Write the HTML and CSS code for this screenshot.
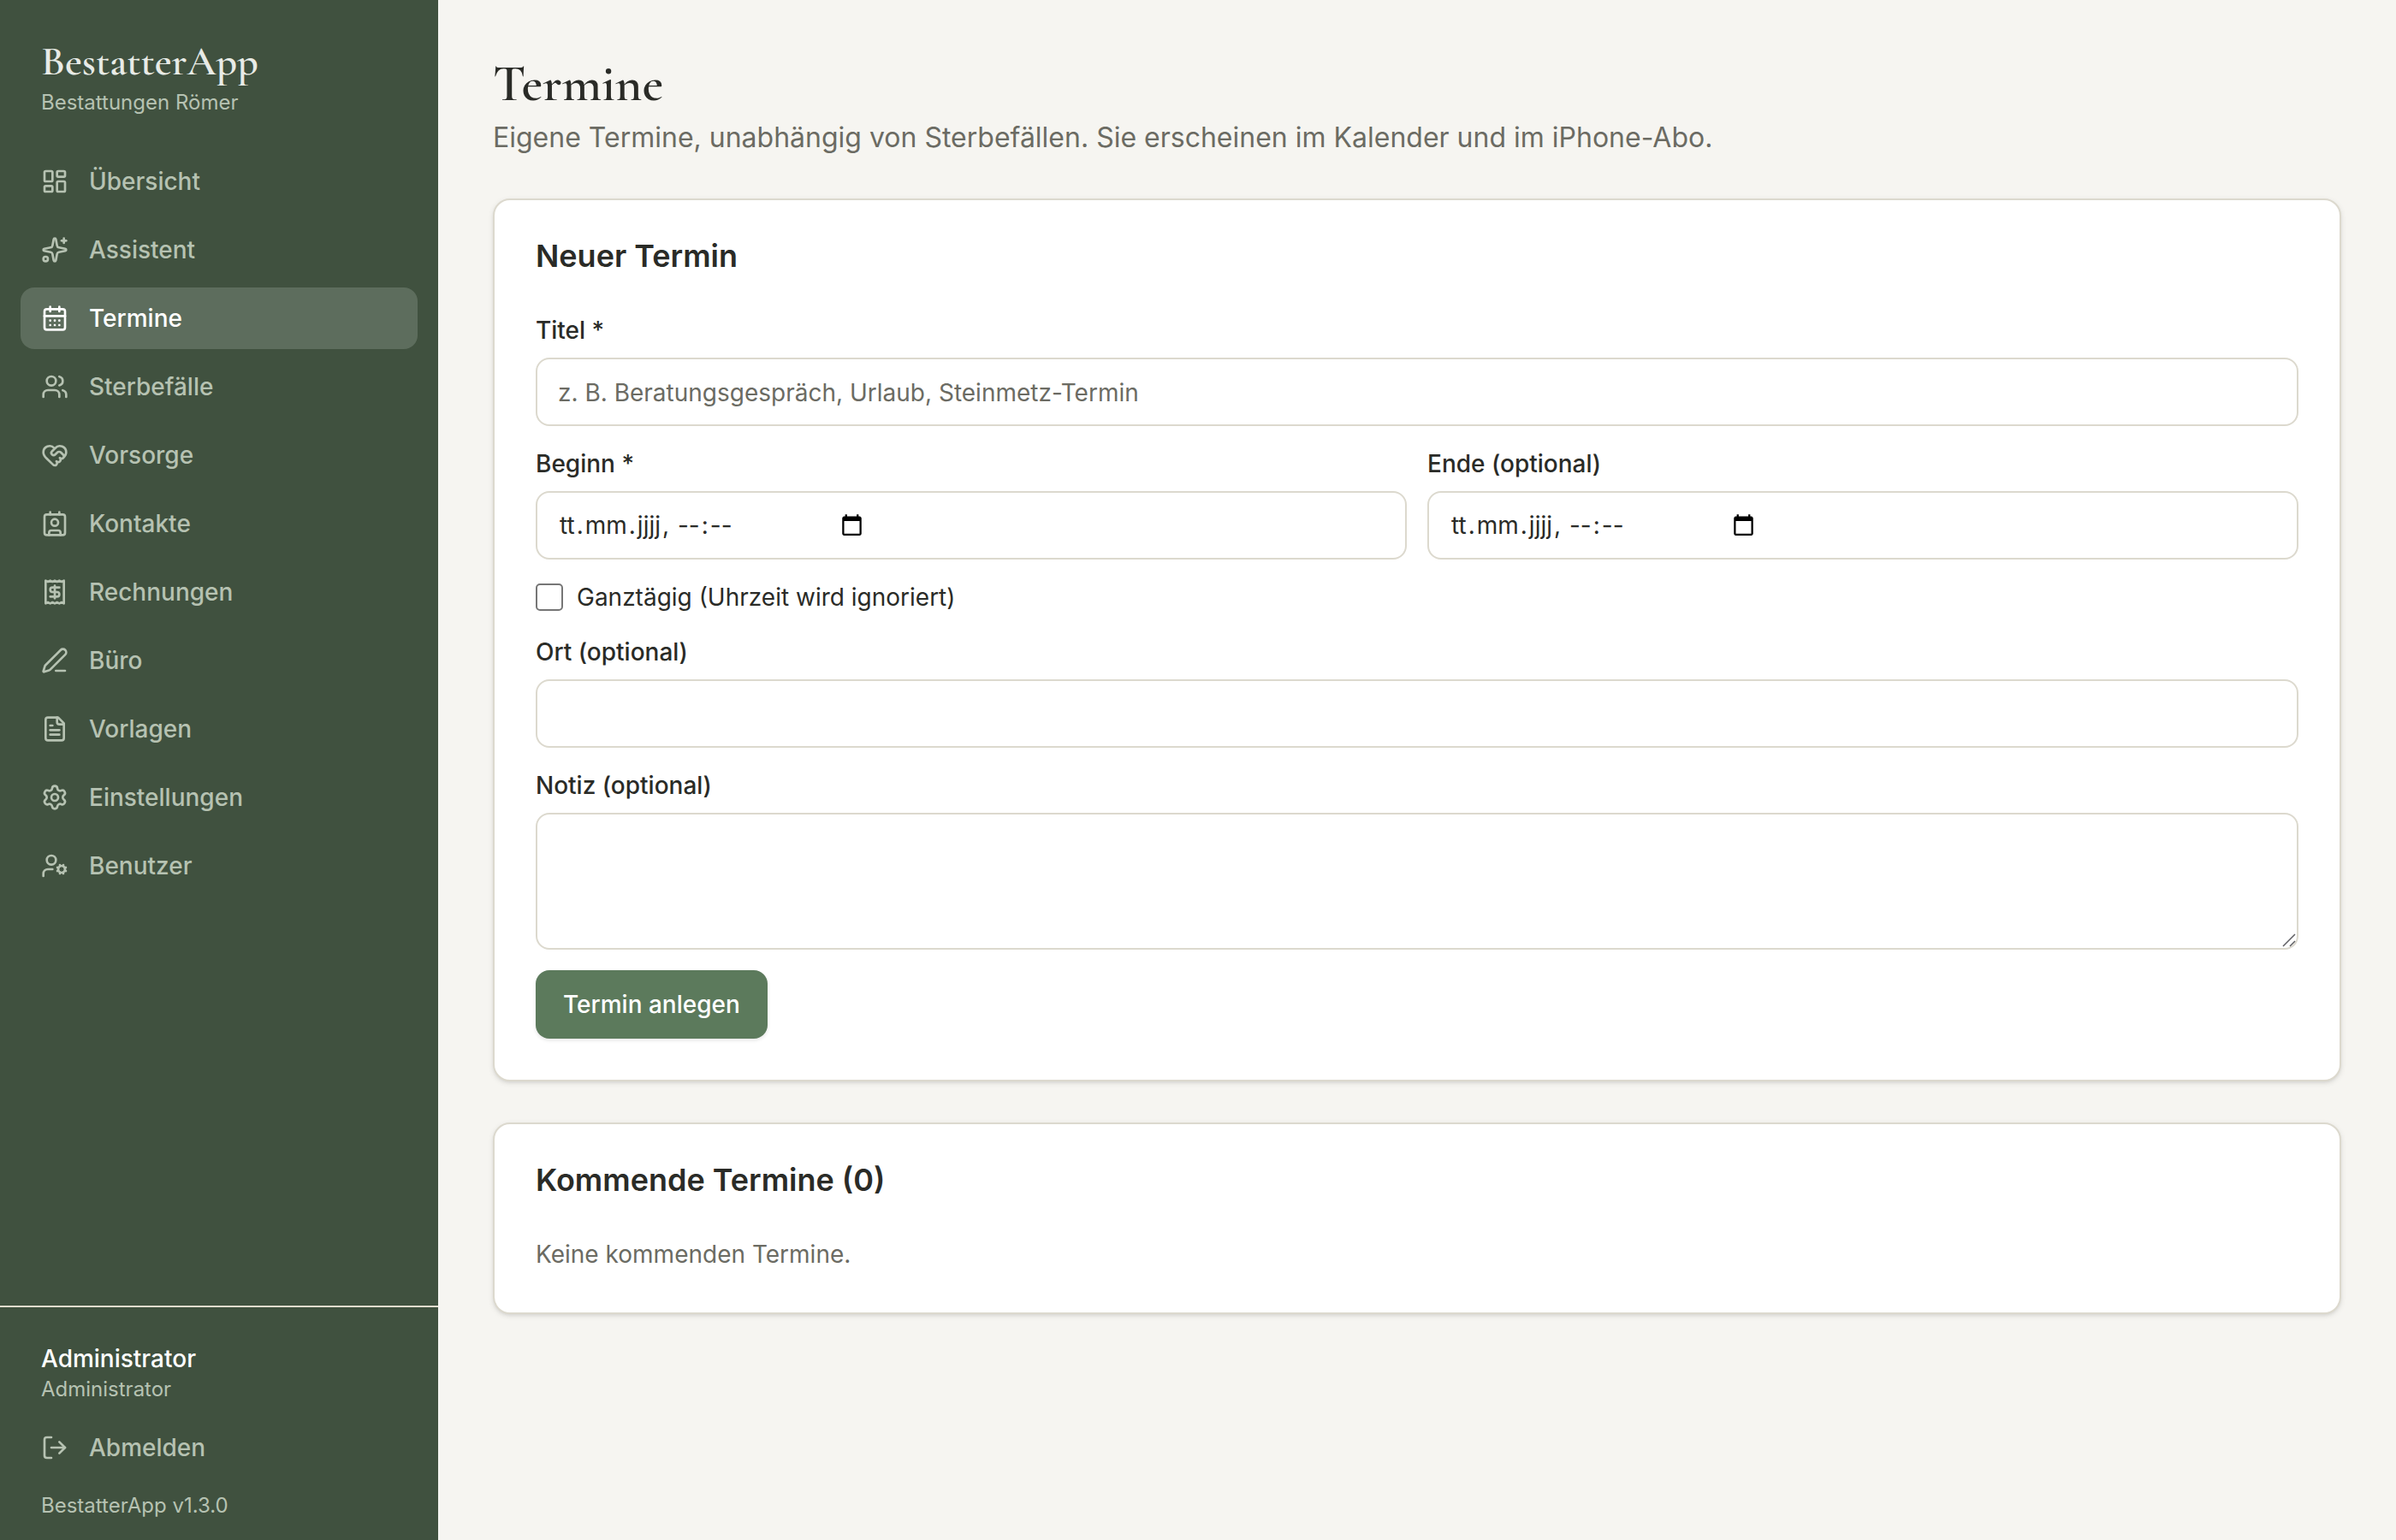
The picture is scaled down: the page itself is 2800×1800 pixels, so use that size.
FILE: index.html
```html
<!DOCTYPE html>
<html lang="de">
<head>
    <meta charset="UTF-8">
    <meta name="viewport" content="width=device-width, initial-scale=1.0">
    <title>Termine – BestatterApp</title>
    <link rel="stylesheet" href="styles.css">
</head>
<body>
    <aside class="sidebar">
        <div class="brand">
            <div class="brand-name">BestatterApp</div>
            <div class="brand-sub">Bestattungen Römer</div>
        </div>
        <nav class="nav">
            <a class="nav-item">
                <svg class="icon" viewBox="0 0 24 24"><rect width="7" height="9" x="3" y="3" rx="1"/><rect width="7" height="5" x="14" y="3" rx="1"/><rect width="7" height="9" x="14" y="12" rx="1"/><rect width="7" height="5" x="3" y="16" rx="1"/></svg>
                <span>Übersicht</span>
            </a>
            <a class="nav-item">
                <svg class="icon" viewBox="0 0 24 24"><path d="M11.017 2.814a1 1 0 0 1 1.966 0l1.051 5.558a2 2 0 0 0 1.594 1.594l5.558 1.051a1 1 0 0 1 0 1.966l-5.558 1.051a2 2 0 0 0-1.594 1.594l-1.051 5.558a1 1 0 0 1-1.966 0l-1.051-5.558a2 2 0 0 0-1.594-1.594l-5.558-1.051a1 1 0 0 1 0-1.966l5.558-1.051a2 2 0 0 0 1.594-1.594z"/><path d="M20 2v4"/><path d="M22 4h-4"/><circle cx="4" cy="20" r="2"/></svg>
                <span>Assistent</span>
            </a>
            <a class="nav-item active">
                <svg class="icon" viewBox="0 0 24 24"><path d="M8 2v4"/><path d="M16 2v4"/><rect width="18" height="18" x="3" y="4" rx="2"/><path d="M3 10h18"/><path d="M8 14h.01"/><path d="M12 14h.01"/><path d="M16 14h.01"/><path d="M8 18h.01"/><path d="M12 18h.01"/><path d="M16 18h.01"/></svg>
                <span>Termine</span>
            </a>
            <a class="nav-item">
                <svg class="icon" viewBox="0 0 24 24"><path d="M16 21v-2a4 4 0 0 0-4-4H6a4 4 0 0 0-4 4v2"/><path d="M16 3.128a4 4 0 0 1 0 7.744"/><path d="M22 21v-2a4 4 0 0 0-3-3.87"/><circle cx="9" cy="7" r="4"/></svg>
                <span>Sterbefälle</span>
            </a>
            <a class="nav-item">
                <svg class="icon" viewBox="0 0 24 24"><path d="M19.414 14.414C21 12.828 22 11.5 22 9.5a5.5 5.5 0 0 0-9.591-3.676.6.6 0 0 1-.818.001A5.5 5.5 0 0 0 2 9.5c0 2.3 1.5 4 3 5.5l5.535 5.362a2 2 0 0 0 2.879.052 2.12 2.12 0 0 0-.004-3 2.124 2.124 0 1 0 3-3 2.124 2.124 0 0 0 3.004 0 2 2 0 0 0 0-2.828l-1.881-1.882a2.41 2.41 0 0 0-3.409 0l-1.71 1.71a2 2 0 0 1-2.828 0 2 2 0 0 1 0-2.828l2.823-2.762"/></svg>
                <span>Vorsorge</span>
            </a>
            <a class="nav-item">
                <svg class="icon" viewBox="0 0 24 24"><path d="M16 2v2"/><path d="M7 22v-2a2 2 0 0 1 2-2h6a2 2 0 0 1 2 2v2"/><path d="M8 2v2"/><circle cx="12" cy="11" r="3"/><rect x="3" y="4" width="18" height="18" rx="2"/></svg>
                <span>Kontakte</span>
            </a>
            <a class="nav-item">
                <svg class="icon" viewBox="0 0 24 24"><path d="M4 2v20l2-1 2 1 2-1 2 1 2-1 2 1 2-1 2 1V2l-2 1-2-1-2 1-2-1-2 1-2-1-2 1Z"/><path d="M16 8h-6a2 2 0 1 0 0 4h4a2 2 0 1 1 0 4H8"/><path d="M12 17.5v-11"/></svg>
                <span>Rechnungen</span>
            </a>
            <a class="nav-item">
                <svg class="icon" viewBox="0 0 24 24"><path d="M13 21h8"/><path d="M21.174 6.812a1 1 0 0 0-3.986-3.987L3.842 16.174a2 2 0 0 0-.5.83l-1.321 4.352a.5.5 0 0 0 .623.622l4.353-1.32a2 2 0 0 0 .83-.497z"/></svg>
                <span>Büro</span>
            </a>
            <a class="nav-item">
                <svg class="icon" viewBox="0 0 24 24"><path d="M15 2H6a2 2 0 0 0-2 2v16a2 2 0 0 0 2 2h12a2 2 0 0 0 2-2V7Z"/><path d="M14 2v4a2 2 0 0 0 2 2h4"/><path d="M10 9H8"/><path d="M16 13H8"/><path d="M16 17H8"/></svg>
                <span>Vorlagen</span>
            </a>
            <a class="nav-item">
                <svg class="icon" viewBox="0 0 24 24"><path d="M9.671 4.136a2.34 2.34 0 0 1 4.659 0 2.34 2.34 0 0 0 3.319 1.915 2.34 2.34 0 0 1 2.33 4.033 2.34 2.34 0 0 0 0 3.831 2.34 2.34 0 0 1-2.33 4.033 2.34 2.34 0 0 0-3.319 1.915 2.34 2.34 0 0 1-4.659 0 2.34 2.34 0 0 0-3.32-1.915 2.34 2.34 0 0 1-2.33-4.033 2.34 2.34 0 0 0 0-3.831A2.34 2.34 0 0 1 6.35 6.051a2.34 2.34 0 0 0 3.319-1.915"/><circle cx="12" cy="12" r="3"/></svg>
                <span>Einstellungen</span>
            </a>
            <a class="nav-item">
                <svg class="icon" viewBox="0 0 24 24"><path d="M10 15H6a4 4 0 0 0-4 4v2"/><path d="m14.305 16.53.923-.382"/><path d="m15.228 13.852-.923-.383"/><path d="m16.852 12.228-.383-.923"/><path d="m16.852 17.772-.383.924"/><path d="m19.148 12.228.383-.923"/><path d="m19.53 18.696-.382-.924"/><path d="m20.772 13.852.924-.383"/><path d="m20.772 16.148.924.383"/><circle cx="18" cy="15" r="3"/><circle cx="9" cy="7" r="4"/></svg>
                <span>Benutzer</span>
            </a>
        </nav>
        <div class="sidebar-footer">
            <div class="user-name">Administrator</div>
            <div class="user-role">Administrator</div>
            <a class="nav-item logout">
                <svg class="icon" viewBox="0 0 24 24"><path d="m16 17 5-5-5-5"/><path d="M21 12H9"/><path d="M9 21H5a2 2 0 0 1-2-2V5a2 2 0 0 1 2-2h4"/></svg>
                <span>Abmelden</span>
            </a>
            <div class="version">BestatterApp v1.3.0</div>
        </div>
    </aside>

    <main class="main">
        <header class="page-header">
            <h1>Termine</h1>
            <p>Eigene Termine, unabhängig von Sterbefällen. Sie erscheinen im Kalender und im iPhone-Abo.</p>
        </header>

        <section class="card">
            <h2>Neuer Termin</h2>
            <form class="form">
                <div class="field">
                    <label for="titel">Titel *</label>
                    <input class="input" type="text" id="titel" placeholder="z. B. Beratungsgespräch, Urlaub, Steinmetz-Termin">
                </div>
                <div class="row">
                    <div class="field">
                        <label>Beginn *</label>
                        <div class="input date-input">
                            <div class="date-text"><span>tt</span>.<span>mm</span>.<span>jjjj</span>, <span>--</span>:<span>--</span></div>
                            <svg class="date-icon" viewBox="0 0 24 24"><path d="M20 3h-1V1h-2v2H7V1H5v2H4c-1.1 0-2 .9-2 2v16c0 1.1.9 2 2 2h16c1.1 0 2-.9 2-2V5c0-1.1-.9-2-2-2zm0 18H4V8h16v13z"/></svg>
                        </div>
                    </div>
                    <div class="field">
                        <label>Ende (optional)</label>
                        <div class="input date-input">
                            <div class="date-text"><span>tt</span>.<span>mm</span>.<span>jjjj</span>, <span>--</span>:<span>--</span></div>
                            <svg class="date-icon" viewBox="0 0 24 24"><path d="M20 3h-1V1h-2v2H7V1H5v2H4c-1.1 0-2 .9-2 2v16c0 1.1.9 2 2 2h16c1.1 0 2-.9 2-2V5c0-1.1-.9-2-2-2zm0 18H4V8h16v13z"/></svg>
                        </div>
                    </div>
                </div>
                <label class="check">
                    <input type="checkbox">
                    <span>Ganztägig (Uhrzeit wird ignoriert)</span>
                </label>
                <div class="field">
                    <label for="ort">Ort (optional)</label>
                    <input class="input" type="text" id="ort">
                </div>
                <div class="field">
                    <label for="notiz">Notiz (optional)</label>
                    <div class="textarea-wrap">
                        <textarea class="input textarea" id="notiz"></textarea>
                        <svg class="grip" viewBox="0 0 16 16"><path d="M1 15 15 1M9 15l6-6"/></svg>
                    </div>
                </div>
                <button class="btn" type="button">Termin anlegen</button>
            </form>
        </section>

        <section class="card">
            <h2>Kommende Termine (0)</h2>
            <p class="empty">Keine kommenden Termine.</p>
        </section>
    </main>
</body>
</html>
```
FILE: styles.css
```css
* {
    box-sizing: border-box;
    margin: 0;
    padding: 0;
}
body {
    font-family: Inter, sans-serif;
    font-size: 28px;
    line-height: 40px;
    color: #2a2b27;
    background-color: #f6f5f1;
    display: flex;
    height: 100vh;
}
.sidebar {
    width: 512px;
    flex-shrink: 0;
    background-color: #40513f;
    color: #b6c2b2;
    display: flex;
    flex-direction: column;
}
.brand {
    padding: 42px 48px 38px;
}
.brand-name {
    font-family: "Cormorant Garamond", "Liberation Serif", serif;
    font-size: 48px;
    font-weight: 600;
    line-height: 60px;
    color: #e8ebe6;
}
.brand-sub {
    font-size: 24px;
    line-height: 36px;
}
.nav {
    flex: 1;
    padding: 0 24px;
    display: flex;
    flex-direction: column;
    gap: 8px;
}
.nav-item {
    display: flex;
    align-items: center;
    gap: 24px;
    height: 72px;
    padding: 0 24px;
    border-radius: 16px;
    font-weight: 500;
    cursor: pointer;
}
.nav-item.active {
    background-color: #5d6d5d;
    color: #fff;
}
.icon {
    width: 32px;
    height: 32px;
    fill: none;
    stroke: currentColor;
    stroke-width: 2;
    stroke-linecap: round;
    stroke-linejoin: round;
}
.sidebar-footer {
    border-top: 2px solid #e0dccd;
    padding: 40px 24px 24px;
}
.user-name,
.user-role,
.version {
    padding: 0 24px;
}
.user-name {
    color: #fff;
    font-weight: 500;
}
.user-role {
    font-size: 24px;
    line-height: 32px;
}
.logout {
    margin-top: 16px;
}
.version {
    font-size: 24px;
    line-height: 32px;
    margin-top: 16px;
}
.main {
    flex: 1;
    padding: 62px 64px 64px;
    display: flex;
    flex-direction: column;
    gap: 47px;
}
.page-header h1 {
    font-family: "Cormorant Garamond", "Liberation Serif", serif;
    font-size: 60px;
    font-weight: 600;
    line-height: 72px;
}
.page-header p {
    font-size: 32px;
    line-height: 48px;
    margin-top: 3px;
    color: #6b6b63;
}
.card {
    background-color: #fff;
    border: 2px solid #dcd9ce;
    border-radius: 20px;
    padding: 48px;
    box-shadow: 0 2px 6px rgba(0, 0, 0, 0.1), 0 2px 4px -2px rgba(0, 0, 0, 0.1);
}
.card + .card {
    margin-top: 1px;
}
.card h2 {
    font-size: 36px;
    font-weight: 600;
    line-height: 35px;
    margin-bottom: 49px;
}
.form {
    display: flex;
    flex-direction: column;
    gap: 24px;
}
.row {
    display: grid;
    grid-template-columns: 1fr 1fr;
    gap: 24px;
}
.field {
    display: flex;
    flex-direction: column;
    gap: 12px;
}
.field label {
    font-weight: 500;
}
.input {
    width: 100%;
    height: 80px;
    padding: 2px 24px 0;
    border: 2px solid #dcd9ce;
    border-radius: 16px;
    background-color: #fff;
    font: inherit;
    color: inherit;
}
.input::placeholder {
    color: #6b6b63;
    opacity: 1;
}
.date-input {
    display: flex;
    align-items: center;
    padding-top: 0;
}
.date-text {
    width: 330px;
}
.date-text span {
    padding: 0 2px;
}
.date-icon {
    width: 27px;
    height: 27px;
    margin-bottom: 1px;
}
.check {
    display: flex;
    align-items: center;
    gap: 16px;
}
.check input {
    appearance: none;
    width: 32px;
    height: 32px;
    border: 2px solid #767676;
    border-radius: 5px;
}
.textarea-wrap {
    position: relative;
    height: 160px;
}
.textarea {
    display: block;
    height: 160px;
    resize: none;
}
.grip {
    position: absolute;
    right: 3px;
    bottom: 3px;
    width: 16px;
    height: 16px;
    fill: none;
    stroke: #5f5f63;
    stroke-width: 1.5;
}
.btn {
    align-self: flex-start;
    height: 80px;
    padding: 0 32px;
    border: none;
    border-radius: 16px;
    background-color: #5c7a5c;
    color: #fff;
    font: inherit;
    font-weight: 500;
    box-shadow: 0 2px 4px rgba(0, 0, 0, 0.1);
    cursor: pointer;
}
.empty {
    color: #6b6b63;
}
```
